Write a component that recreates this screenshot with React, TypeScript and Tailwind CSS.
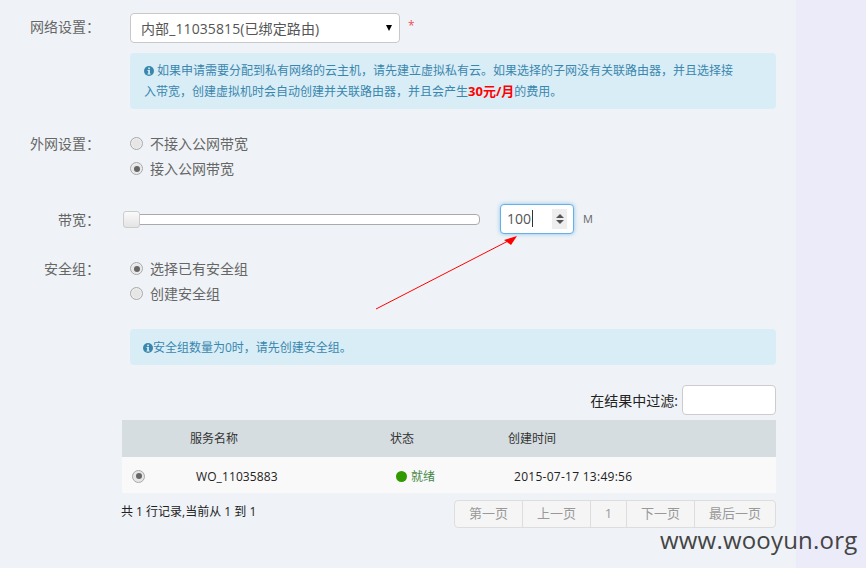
const cjk = "font-['Open_Sans','Noto_Sans_CJK_SC',sans-serif]";

function InfoIcon() {
	return (
		<svg viewBox="0 0 10 10" className="w-[10px] h-[10px] shrink-0 inline-block align-[-1px]">
			<circle cx="5" cy="5" r="5" fill="#3a87ad" />
			<rect x="4.2" y="1.6" width="1.7" height="1.6" fill="#d9edf7" />
			<path d="M3.5 4h2.4v3.4h.7v1H3.5v-1h.7V5h-.7z" fill="#d9edf7" />
		</svg>
	);
}

function Radio({ checked, label }: { checked?: boolean; label: string }) {
	return (
		<div className="flex items-center h-[25px]">
			<span className="w-[13px] h-[13px] rounded-full border border-[#a9a9a9] bg-[#e6e6e6] flex items-center justify-center mr-[7px] shadow-[inset_0_0_2px_#fff]">
				{checked && <span className="w-[6px] h-[6px] rounded-full bg-[#666]" />}
			</span>
			<span className="text-[14px] text-[#666]">{label}</span>
		</div>
	);
}

function FormLabel({ children }: { children: string }) {
	return <div className="w-[100px] shrink-0 text-right text-[14px] text-[#666]">{children}</div>;
}

const pages = [
	{ text: "第一页", w: "w-[67px]" },
	{ text: "上一页", w: "w-[68px]" },
	{ text: "1", w: "w-[36px]" },
	{ text: "下一页", w: "w-[68px]" },
	{ text: "最后一页", w: "w-[81px]" },
];

export default function App() {
	return (
		<div className={`relative w-[866px] h-[568px] overflow-hidden flex bg-[#ecebf9] ${cjk}`}>
			<div className="w-[796px] h-full bg-[#eff3f7] pt-[13px]">
				<div className="flex">
					<div className="pt-[3px]"><FormLabel>网络设置：</FormLabel></div>
					<div className="ml-[30px] w-[646px]">
						<div className="flex items-start">
							<div className="w-[270px] h-[30px] bg-white border border-[#c8c8c8] rounded-[4px] pl-[10px] pr-[7px] flex items-center justify-between text-[14px] text-[#555]">
								<span className="tracking-[0.1px]">内部_11035815(已绑定路由)</span>
								<span className="w-0 h-0 border-x-[3.5px] border-x-transparent border-t-[6px] border-t-black" />
							</div>
							<span className="ml-[8px] mt-[4px] text-[12px] text-[#f0505a]">*</span>
						</div>
						<div className="mt-[10px] h-[56px] bg-[#d9edf7] rounded-[4px] px-[14px] pt-[8px] text-[12px] leading-[20px] text-[#3a87ad]">
							<InfoIcon /> 如果申请需要分配到私有网络的云主机，请先建立虚拟私有云。如果选择的子网没有关联路由器，并且选择接
							<br />
							入带宽，创建虚拟机时会自动创建并关联路由器，并且会产生
							<b className="text-[#ff0000] font-bold text-[13px]">30元/月</b>
							的费用。
						</div>
					</div>
				</div>

				<div className="flex mt-[22px]">
					<div className="pt-[2px]"><FormLabel>外网设置：</FormLabel></div>
					<div className="ml-[30px]">
						<Radio label="不接入公网带宽" />
						<Radio checked label="接入公网带宽" />
					</div>
				</div>

				<div className="flex items-center mt-[23px] h-[30px]">
					<FormLabel>带宽：</FormLabel>
					<div className="ml-[23px] relative w-[357px] h-[11px] bg-white border border-[#aaa] rounded-[4px]">
						<span className="absolute left-[-1px] top-[-4px] w-[17px] h-[17px] rounded-[3px] border border-[#ccc] bg-gradient-to-b from-[#fafafa] to-[#e4e4e4]" />
					</div>
					<div className="ml-[20px] w-[74px] h-[30px] bg-white border border-[#66afe9] rounded-[4px] shadow-[0_0_4px_rgba(102,175,233,0.7)] flex items-center pl-[6px] text-[14px] text-[#555]">
						<span className="border-r border-[#333] pr-px leading-[17px] -translate-y-px">100</span>
						<span className="ml-auto mr-[6px] w-[15px] h-[20px] bg-[#eeeeee] flex flex-col items-center justify-center gap-[2px]">
							<span className="w-0 h-0 border-x-[4px] border-x-transparent border-b-[4px] border-b-[#555]" />
							<span className="w-0 h-0 border-x-[4px] border-x-transparent border-t-[4px] border-t-[#555]" />
						</span>
					</div>
					<span className="ml-[9px] text-[11px] text-[#666]">M</span>
				</div>

				<div className="flex mt-[22px]">
					<div className="pt-[2px]"><FormLabel>安全组：</FormLabel></div>
					<div className="ml-[30px]">
						<Radio checked label="选择已有安全组" />
						<Radio label="创建安全组" />
					</div>
				</div>

				<div className="ml-[130px] w-[646px] mt-[23px] h-[36px] bg-[#d9edf7] rounded-[4px] pl-[13px] pt-px flex items-center text-[12px] text-[#3a87ad]">
					<InfoIcon />
					<span>安全组数量为0时，请先创建安全组。</span>
				</div>

				<div className="ml-[122px] w-[654px]">
					<div className="flex items-center justify-end mt-[20px] h-[30px] text-[14px] text-[#222]">
						<span className="mr-[4px]">在结果中过滤:</span>
						<div className="w-[94px] h-[30px] bg-white border border-[#ccc] rounded-[4px]" />
					</div>
					<div className="mt-[5px] h-[37px] bg-[#d5dde0] flex items-center text-[12px] text-[#333]">
						<span className="ml-[68px] w-[200px]">服务名称</span>
						<span className="w-[118px]">状态</span>
						<span>创建时间</span>
					</div>
					<div className="h-[36px] bg-[#f9f9f9] flex items-center text-[12px] text-[#222]">
						<span className="ml-[10px] mt-[2px] w-[13px] h-[13px] rounded-full border border-[#a9a9a9] bg-[#e6e6e6] flex items-center justify-center">
							<span className="w-[6px] h-[6px] rounded-full bg-[#666]" />
						</span>
						<span className="ml-[51px] w-[200px] pt-[3px] tracking-[0.1px]">WO_11035883</span>
						<span className="w-[118px] flex items-center pt-[3px] text-[#468847]">
							<span className="w-[11px] h-[11px] rounded-full bg-[#339900] mr-[4px]" />
							就绪
						</span>
						<span className="pt-[3px] tracking-[0.27px]">2015-07-17 13:49:56</span>
					</div>
					<div className="flex justify-between mt-[7px]">
						<span className="text-[12px] text-[#222] mt-[3px] -ml-px">共 1 行记录,当前从 1 到 1</span>
						<div className="flex h-[28px] border border-[#ddd] rounded-[4px] bg-[#f5f5f5] text-[13px] text-[#999]">
							{pages.map((page, i) => (
								<span
									key={page.text}
									className={`${page.w} flex items-center justify-center ${i > 0 ? "border-l border-[#ddd]" : ""}`}
								>
									{page.text}
								</span>
							))}
						</div>
					</div>
				</div>
			</div>

			{/* red arrow annotation */}
			<svg className="absolute left-0 top-0 pointer-events-none" width="866" height="568">
				<line x1="376" y1="309" x2="510" y2="240" stroke="#ff0000" strokeWidth="1" />
				<path d="M517 236 L504 240 L511 245 Z" fill="#ff0000" />
			</svg>

			<span className="absolute left-[660px] top-[524px] text-[24px] leading-[32px] tracking-[0.2px] text-[#444] font-['Open_Sans',sans-serif]">
				www.wooyun.org
			</span>
		</div>
	);
}
